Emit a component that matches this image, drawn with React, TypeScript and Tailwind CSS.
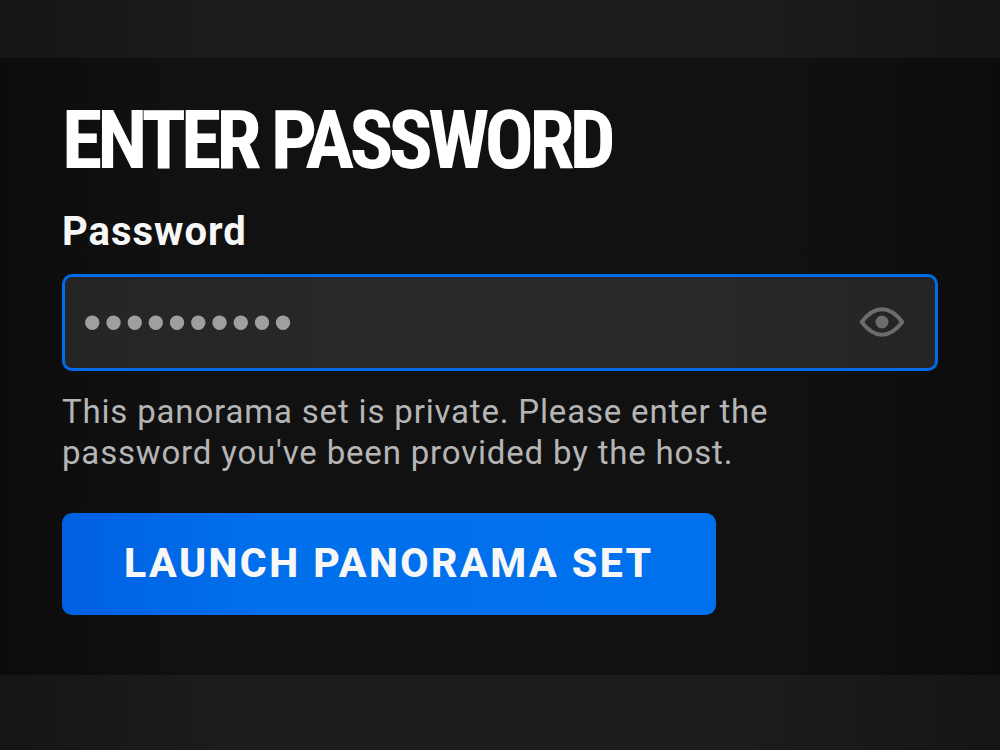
import React, { useState } from 'react'

type EyeIconProps = {
  className?: string
}

const EyeIcon: React.FC<EyeIconProps> = ({ className }) => (
  <svg viewBox="0 0 46 32" fill="none" aria-hidden="true" className={className}>
    <path
      d="M2.700 15C8 8 14.500 2.300 23 2.300S38 8 43.300 15C38 22 31.500 27.700 23 27.700S8 22 2.700 15Z"
      stroke="currentColor"
      strokeWidth="4"
      strokeLinejoin="round"
    />
    <circle cx="23" cy="15" r="6.500" fill="currentColor" />
  </svg>
)

export default function App() {
  const [password, setPassword] = useState('panorama24')
  const [visible, setVisible] = useState(false)

  return (
    <div className="min-h-screen bg-[linear-gradient(to_right,#151515,#1c1c1c_22%,#1c1c1c_75%,#151515)] pt-[58px] pb-[75px] font-['Roboto','Liberation_Sans',sans-serif]">
      <main className="bg-[linear-gradient(to_right,#0c0c0c,#111111_18%,#111111_78%,#0c0c0c)] px-[62px] pt-10 pb-[60px]">
        <form onSubmit={(e) => e.preventDefault()}>
          <h1 className="font-['Roboto_Condensed','Roboto',sans-serif] text-[82px] leading-[84px] font-bold tracking-[-0.06em] text-white uppercase">
            Enter Password
          </h1>

          <label
            htmlFor="password"
            className="mt-[25px] block text-[40px] leading-[50px] font-bold tracking-wide text-[#f7f7f7]"
          >
            Password
          </label>

          <div className="mt-[17px] flex h-[97px] items-center rounded-[10px] border-3 border-[#006bea] bg-[linear-gradient(to_right,#252525,#292929_40%,#292929_70%,#242424)] pr-[30px] pl-[18px]">
            <input
              id="password"
              type={visible ? 'text' : 'password'}
              value={password}
              onChange={(e) => setPassword(e.target.value)}
              autoComplete="off"
              className="min-w-0 flex-1 bg-transparent font-['Liberation_Sans',sans-serif] text-[53px] leading-[60px] tracking-wider text-[#9f9f9f] outline-none"
            />
            <button
              type="button"
              aria-label={visible ? 'Hide password' : 'Show password'}
              onClick={() => setVisible(!visible)}
              className="text-[#6c6c6c]"
            >
              <EyeIcon className="h-8 w-[46px]" />
            </button>
          </div>

          <p className="mt-5 max-w-[740px] text-[33px] leading-[41px] tracking-wide text-[#b5b5b5]">
            This panorama set is private. Please enter the password you've been provided by the host.
          </p>

          <button
            type="submit"
            className="mt-10 h-[102px] rounded-[10px] bg-linear-to-r from-[#0060e2] via-[#006fec] via-30% to-[#0071ed] px-[62px] pb-[2px] text-[41px] leading-[50px] font-extrabold tracking-[0.06em] text-[#f7f7f7] uppercase"
          >
            Launch Panorama Set
          </button>
        </form>
      </main>
    </div>
  )
}
